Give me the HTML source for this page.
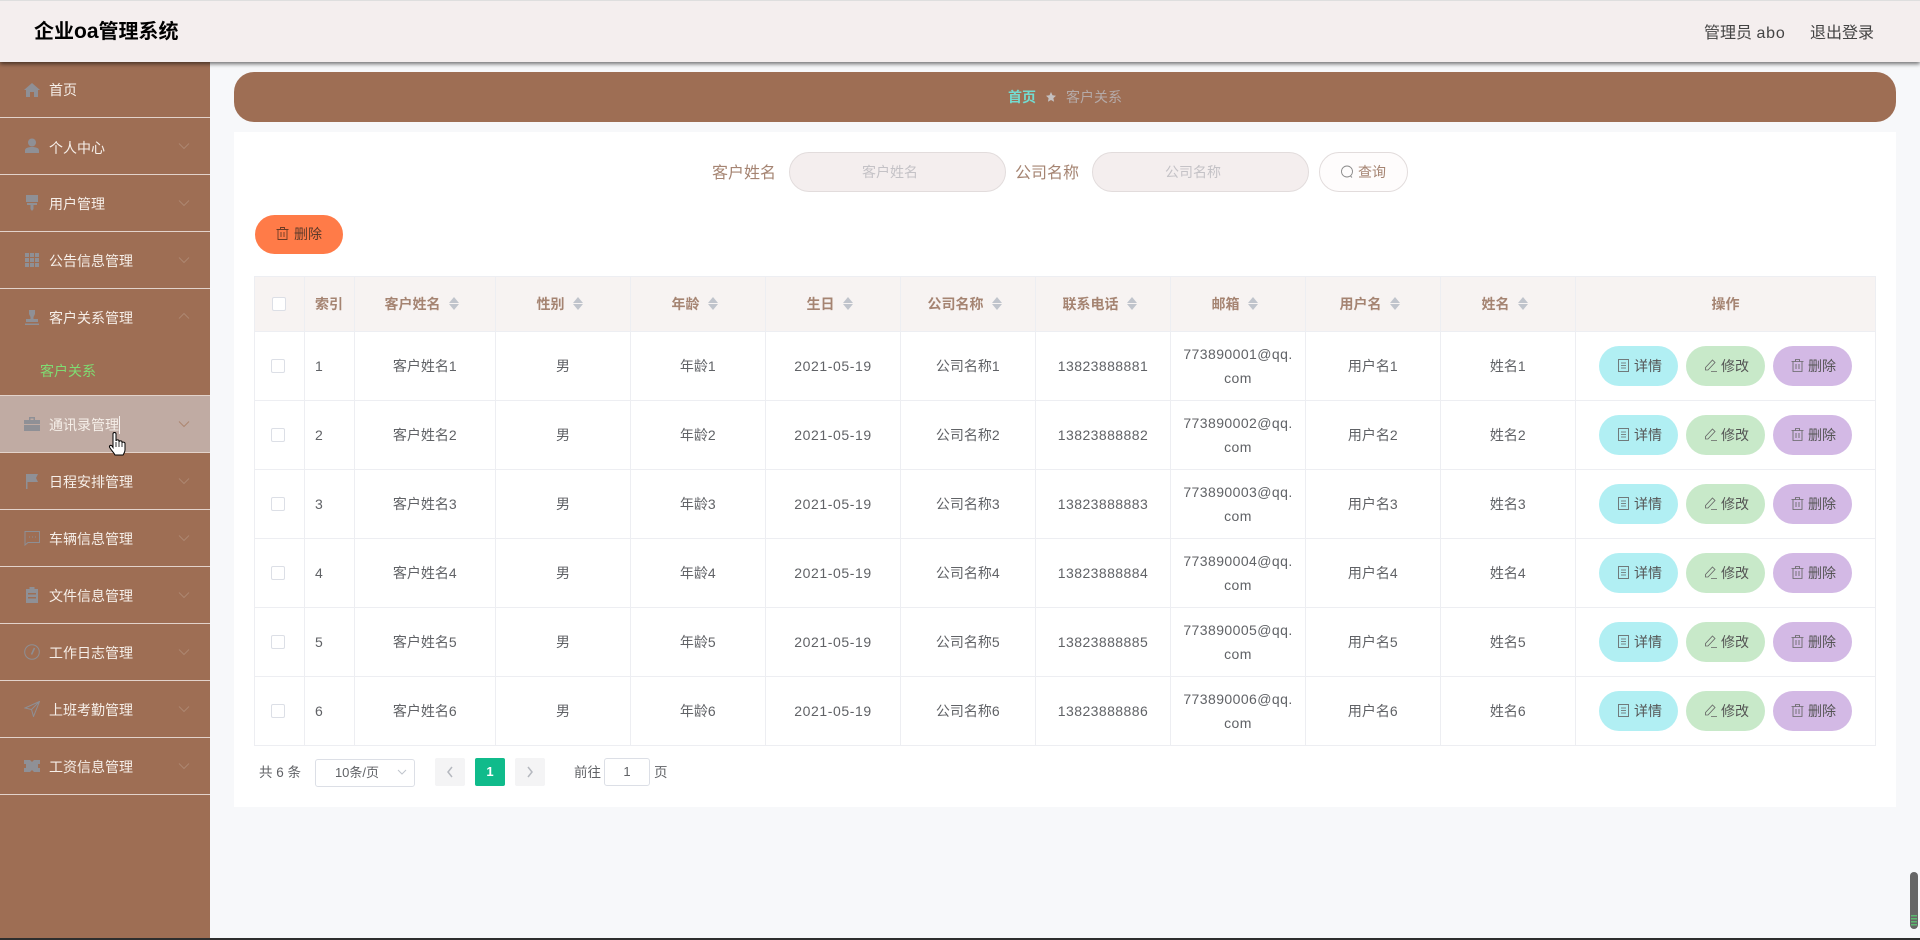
<!DOCTYPE html>
<html lang="zh-CN">
<head>
<meta charset="utf-8">
<title>企业oa管理系统</title>
<style>
*{box-sizing:border-box}
html,body{margin:0;padding:0;width:1920px;height:940px;overflow:hidden;background:#f7f8fa;font-family:"Liberation Sans","Noto Sans CJK SC",sans-serif;font-size:14px;color:#606266}
.abs{position:absolute}
#top{left:0;top:0;width:1920px;height:62px;background:#f4eeee;border-top:1px solid #dedede;box-shadow:0 2px 4px rgba(0,0,0,.55);z-index:5}
#top .t{position:absolute;left:34px;top:17px;font-size:20px;line-height:28px;font-weight:700;color:#000;white-space:nowrap}
#top .t span{font-size:21px}
#top .r{position:absolute;top:20px;line-height:26px;font-size:16px;color:#444;white-space:nowrap}
#side{left:0;top:62px;width:210px;height:876px;background:#9e6e54}
.m{position:absolute;left:0;width:210px;color:#f6efe9;line-height:20px;white-space:nowrap}
.m .tx{position:absolute;left:49px}
.m svg.ic{position:absolute;left:24px;width:16px;height:16px;fill:#8f9096}
.m svg.ch{position:absolute;left:178px;width:12px;height:8px;fill:none;stroke:#ad8670;stroke-width:1}
.ln{position:absolute;left:0;width:210px;height:1px;background:#e3d3cb}
#bc{left:234px;top:72px;width:1662px;height:50px;background:#9e6e54;border-radius:20px}
#card{left:234px;top:132px;width:1662px;height:675px;background:#fff}
.lb{font-size:16px;color:#a58472;line-height:24px;white-space:nowrap}
.inp{height:40px;top:152px;width:217px;background:#f4eeee;border:1px solid #e2dcdc;border-radius:20px;text-align:center;line-height:38px;color:#c4c2c6;font-size:14px;padding-right:15px}
.btn{display:block;position:absolute;height:40px;width:79px;border-radius:20px;line-height:40px;font-size:14px;color:#555;white-space:nowrap}
.btn svg{position:absolute;left:17px;top:12px;width:15px;height:15px;fill:none;stroke:#666;stroke-width:.85}
.btn span{position:absolute;left:35px}
.c1{background:#b1eff3}.c2{background:#c8e9c9}.c3{background:#d3b9e5}
table{position:absolute;left:254px;top:276px;width:1621px;border-collapse:collapse;table-layout:fixed;background:#fff}
th,td{border:1px solid #edeef2;text-align:center;padding:0;font-size:14px}
th{height:55px;background:#f7f3f2;color:#a58472;font-weight:700}
th:nth-child(n+3):nth-child(-n+11){padding-right:7px}
td{height:69px;color:#606266;line-height:24px}
.num{letter-spacing:.43px}
.dt{letter-spacing:.6px}
.cb{display:inline-block;position:relative;top:-1px;width:14px;height:14px;border:1px solid #dcdfe6;border-radius:2px;background:#fff;vertical-align:middle}
.car{display:inline-block;position:relative;top:-2px;width:10px;height:14px;margin-left:8px;vertical-align:middle}
.car:before,.car:after{content:"";position:absolute;left:0;border:5px solid transparent}
.car:before{top:1px;border-bottom:6px solid #c0c4cc;border-top:0}
.car:after{top:8px;border-top:6px solid #c0c4cc;border-bottom:0}
.pg{position:absolute;top:758px;height:28px;width:30px;background:#f4f4f5;border-radius:2px;text-align:center;line-height:28px;color:#c0c4cc}
.pt{position:absolute;top:762px;line-height:22px;font-size:13.500px;color:#606266;white-space:nowrap}
</style>
</head>
<body>
<svg width="0" height="0" style="position:absolute">
<symbol id="doc" viewBox="0 0 15 15"><rect x="2.500" y="1.500" width="10" height="12"/><path d="M5 5h5M5 7.500h5M5 10h5"/></symbol>
<symbol id="edit" viewBox="0 0 15 15"><path d="M9.500 2l2.500 2.500-7 7.500H2.500v-2.500zM8 13.500h6"/></symbol>
<symbol id="del" viewBox="0 0 15 15"><path d="M1.500 3.500h12M5.500 3.500V1.500h4v2M3 3.500v10h9v-10M6 6v5M9 6v5"/></symbol>
</svg>

<div id="top" class="abs">
  <div class="t">企业<span>oa</span>管理系统</div>
  <div class="r" style="left:1704px">管理员 <span style="letter-spacing:.8px">abo</span></div>
  <div class="r" style="left:1810px">退出登录</div>
</div>

<div id="side" class="abs"></div>
<div class="abs" style="left:0;top:396px;width:210px;height:56px;background:#c0aba3"></div>

<div class="m" style="top:62px;height:55px"><svg class="ic" style="top:20px" viewBox="0 0 16 16"><path d="M8 1L0 8h2v7h4v-5h4v5h4V8h2z"/></svg><span class="tx" style="top:18px">首页</span></div>
<div class="ln" style="top:117px"></div>
<div class="m" style="top:118px"><svg class="ic" style="top:20px" viewBox="0 0 16 16"><circle cx="8" cy="4.500" r="4"/><path d="M1 15v-2.500C1 10 4 9 8 9s7 1 7 3.500V15z"/></svg><span class="tx" style="top:20px">个人中心</span><svg class="ch" style="top:24px" viewBox="0 0 12 8"><path d="M1 1.500l5 5 5-5"/></svg></div>
<div class="ln" style="top:174px"></div>
<div class="m" style="top:175px"><svg class="ic" style="top:20px" viewBox="0 0 16 16"><path d="M2 0h12v7H2zM3 8h10v2H9.500v4L8 16l-1.500-2v-4H3z"/></svg><span class="tx" style="top:19px">用户管理</span><svg class="ch" style="top:24px" viewBox="0 0 12 8"><path d="M1 1.500l5 5 5-5"/></svg></div>
<div class="ln" style="top:231px"></div>
<div class="m" style="top:232px"><svg class="ic" style="top:20px" viewBox="0 0 16 16"><path d="M1 1h4v4H1zM6 1h4v4H6zM11 1h4v4h-4zM1 6h4v4H1zM6 6h4v4H6zM11 6h4v4h-4zM1 11h4v4H1zM6 11h4v4H6zM11 11h4v4h-4z"/></svg><span class="tx" style="top:19px">公告信息管理</span><svg class="ch" style="top:24px" viewBox="0 0 12 8"><path d="M1 1.500l5 5 5-5"/></svg></div>
<div class="ln" style="top:288px"></div>
<div class="m" style="top:289px"><svg class="ic" style="top:20px" viewBox="0 0 16 16"><path d="M5 1h6v4L9.500 8v2H14v3H2v-3h4.500V8L5 5zM1 14.500h14V16H1z"/></svg><span class="tx" style="top:19px">客户关系管理</span><svg class="ch" style="top:23px" viewBox="0 0 12 8"><path d="M1 6.500l5-5 5 5"/></svg></div>
<div class="m" style="top:345px;color:#7fdc72"><span class="tx" style="left:40px;top:16px">客户关系</span></div>
<div class="ln" style="top:395px"></div>
<div class="m" style="top:396px"><svg class="ic" style="top:20px" viewBox="0 0 16 16"><path d="M5 1h6v3h5v4H0V4h5zM6.500 2.500V4h3V2.500zM0 9h16v6H0z"/></svg><span class="tx" style="top:19px">通讯录管理</span><svg class="ch" style="top:24px" viewBox="0 0 12 8"><path d="M1 1.500l5 5 5-5"/></svg></div>
<div class="ln" style="top:452px"></div>
<div class="m" style="top:453px"><svg class="ic" style="top:20px" viewBox="0 0 16 16"><path d="M2 1h12l-2 4 2 4H3.500v7H2z"/></svg><span class="tx" style="top:19px">日程安排管理</span><svg class="ch" style="top:24px" viewBox="0 0 12 8"><path d="M1 1.500l5 5 5-5"/></svg></div>
<div class="ln" style="top:509px"></div>
<div class="m" style="top:510px"><svg class="ic" style="top:20px;fill:none;stroke:#8e8f94;stroke-width:1" viewBox="0 0 16 16"><path d="M1 1.500h14.500v11H4L1 15zM5 7h1M8 7h1M11 7h1"/></svg><span class="tx" style="top:19px">车辆信息管理</span><svg class="ch" style="top:24px" viewBox="0 0 12 8"><path d="M1 1.500l5 5 5-5"/></svg></div>
<div class="ln" style="top:566px"></div>
<div class="m" style="top:567px"><svg class="ic" style="top:20px" viewBox="0 0 16 16"><path d="M5.500 0h5v2H14v14H2V2h3.500zM4 6v1.500h8V6zM4 10v1.500h8V10z"/></svg><span class="tx" style="top:19px">文件信息管理</span><svg class="ch" style="top:24px" viewBox="0 0 12 8"><path d="M1 1.500l5 5 5-5"/></svg></div>
<div class="ln" style="top:623px"></div>
<div class="m" style="top:624px"><svg class="ic" style="top:20px;fill:none;stroke:#8e8f94;stroke-width:1" viewBox="0 0 16 16"><circle cx="8" cy="8" r="7.300"/><path d="M10.500 4L7.500 10.500" stroke-width="1.500"/></svg><span class="tx" style="top:19px">工作日志管理</span><svg class="ch" style="top:24px" viewBox="0 0 12 8"><path d="M1 1.500l5 5 5-5"/></svg></div>
<div class="ln" style="top:680px"></div>
<div class="m" style="top:681px"><svg class="ic" style="top:20px;fill:none;stroke:#8e8f94;stroke-width:1" viewBox="0 0 16 16"><path d="M15.500 .5L1 7l6.500 1.500L9.500 15.500zM7.500 8.500L15.500 .5"/></svg><span class="tx" style="top:19px">上班考勤管理</span><svg class="ch" style="top:24px" viewBox="0 0 12 8"><path d="M1 1.500l5 5 5-5"/></svg></div>
<div class="ln" style="top:737px"></div>
<div class="m" style="top:738px"><svg class="ic" style="top:20px" viewBox="0 0 16 16"><path d="M0 2h6l2 2 2-2h6v4h-2v4h2v4h-6l-2-2-2 2H0v-4h2V6H0z"/></svg><span class="tx" style="top:19px">工资信息管理</span><svg class="ch" style="top:24px" viewBox="0 0 12 8"><path d="M1 1.500l5 5 5-5"/></svg></div>
<div class="ln" style="top:794px"></div>

<div id="bc" class="abs"></div>
<div class="abs" style="left:1008px;top:87px;line-height:20px;font-weight:700;color:#73dbd0">首页</div>
<svg class="abs" style="left:1046px;top:92px" width="10" height="10" viewBox="0 0 10 10"><path d="M5 0l1.500 3.300 3.500.4-2.600 2.400.7 3.600L5 8 1.900 9.700l.7-3.600L0 3.700l3.500-.4z" fill="#c4c0c0"/></svg>
<div class="abs" style="left:1066px;top:87px;line-height:20px;color:#b5aaa8">客户关系</div>

<div id="card" class="abs"></div>

<div class="abs lb" style="left:712px;top:162px">客户姓名</div>
<div class="abs inp" style="left:789px">客户姓名</div>
<div class="abs lb" style="left:1015px;top:162px">公司名称</div>
<div class="abs inp" style="left:1092px">公司名称</div>
<div class="abs" style="left:1319px;top:152px;width:89px;height:40px;background:#fefcfc;border:1px solid #e2dcdc;border-radius:20px"></div>
<svg class="abs" style="left:1340px;top:165px" width="14" height="14" viewBox="0 0 14 14" fill="none" stroke="#8a8a8a" stroke-width=".9"><circle cx="7" cy="6.500" r="5.500"/><path d="M10.500 11l1.500 1.500"/></svg>
<div class="abs" style="left:1358px;top:162px;line-height:20px;color:#a58472">查询</div>

<div class="abs" style="left:255px;top:215px;width:88px;height:39px;background:#ff7b48;border-radius:20px"></div>
<svg class="abs" style="left:275px;top:226px;fill:none;stroke:#6b3a24;stroke-width:.9" width="15" height="15"><use href="#del"/></svg>
<div class="abs" style="left:294px;top:224px;line-height:20px;color:#5c3a2a">删除</div>

<table>
<colgroup><col style="width:50px"><col style="width:50px"><col style="width:141px"><col style="width:135px"><col style="width:135px"><col style="width:135px"><col style="width:135px"><col style="width:135px"><col style="width:135px"><col style="width:135px"><col style="width:135px"><col style="width:300px"></colgroup>
<tr><th><span class="cb" style="margin-left:-1px"></span></th><th style="text-align:left;padding-left:10px">索引</th><th>客户姓名<i class="car"></i></th><th>性别<i class="car"></i></th><th>年龄<i class="car"></i></th><th>生日<i class="car"></i></th><th>公司名称<i class="car"></i></th><th>联系电话<i class="car"></i></th><th>邮箱<i class="car"></i></th><th>用户名<i class="car"></i></th><th>姓名<i class="car"></i></th><th>操作</th></tr>
<tr><td><span class="cb" style="margin-left:-3px"></span></td><td class="num" style="text-align:left;padding-left:10px">1</td><td>客户姓名<span class="num">1</span></td><td>男</td><td>年龄<span class="num">1</span></td><td class="dt">2021-05-19</td><td>公司名称<span class="num">1</span></td><td class="num">13823888881</td><td class="num">773890001@qq.<br>com</td><td>用户名<span class="num">1</span></td><td>姓名<span class="num">1</span></td><td></td></tr>
<tr><td><span class="cb" style="margin-left:-3px"></span></td><td class="num" style="text-align:left;padding-left:10px">2</td><td>客户姓名<span class="num">2</span></td><td>男</td><td>年龄<span class="num">2</span></td><td class="dt">2021-05-19</td><td>公司名称<span class="num">2</span></td><td class="num">13823888882</td><td class="num">773890002@qq.<br>com</td><td>用户名<span class="num">2</span></td><td>姓名<span class="num">2</span></td><td></td></tr>
<tr><td><span class="cb" style="margin-left:-3px"></span></td><td class="num" style="text-align:left;padding-left:10px">3</td><td>客户姓名<span class="num">3</span></td><td>男</td><td>年龄<span class="num">3</span></td><td class="dt">2021-05-19</td><td>公司名称<span class="num">3</span></td><td class="num">13823888883</td><td class="num">773890003@qq.<br>com</td><td>用户名<span class="num">3</span></td><td>姓名<span class="num">3</span></td><td></td></tr>
<tr><td><span class="cb" style="margin-left:-3px"></span></td><td class="num" style="text-align:left;padding-left:10px">4</td><td>客户姓名<span class="num">4</span></td><td>男</td><td>年龄<span class="num">4</span></td><td class="dt">2021-05-19</td><td>公司名称<span class="num">4</span></td><td class="num">13823888884</td><td class="num">773890004@qq.<br>com</td><td>用户名<span class="num">4</span></td><td>姓名<span class="num">4</span></td><td></td></tr>
<tr><td><span class="cb" style="margin-left:-3px"></span></td><td class="num" style="text-align:left;padding-left:10px">5</td><td>客户姓名<span class="num">5</span></td><td>男</td><td>年龄<span class="num">5</span></td><td class="dt">2021-05-19</td><td>公司名称<span class="num">5</span></td><td class="num">13823888885</td><td class="num">773890005@qq.<br>com</td><td>用户名<span class="num">5</span></td><td>姓名<span class="num">5</span></td><td></td></tr>
<tr><td><span class="cb" style="margin-left:-3px"></span></td><td class="num" style="text-align:left;padding-left:10px">6</td><td>客户姓名<span class="num">6</span></td><td>男</td><td>年龄<span class="num">6</span></td><td class="dt">2021-05-19</td><td>公司名称<span class="num">6</span></td><td class="num">13823888886</td><td class="num">773890006@qq.<br>com</td><td>用户名<span class="num">6</span></td><td>姓名<span class="num">6</span></td><td></td></tr>
</table>

<a class="btn c1" style="left:1599px;top:346px"><svg><use href="#doc"/></svg><span>详情</span></a><a class="btn c2" style="left:1686px;top:346px"><svg><use href="#edit"/></svg><span>修改</span></a><a class="btn c3" style="left:1773px;top:346px"><svg><use href="#del"/></svg><span>删除</span></a>
<a class="btn c1" style="left:1599px;top:415px"><svg><use href="#doc"/></svg><span>详情</span></a><a class="btn c2" style="left:1686px;top:415px"><svg><use href="#edit"/></svg><span>修改</span></a><a class="btn c3" style="left:1773px;top:415px"><svg><use href="#del"/></svg><span>删除</span></a>
<a class="btn c1" style="left:1599px;top:484px"><svg><use href="#doc"/></svg><span>详情</span></a><a class="btn c2" style="left:1686px;top:484px"><svg><use href="#edit"/></svg><span>修改</span></a><a class="btn c3" style="left:1773px;top:484px"><svg><use href="#del"/></svg><span>删除</span></a>
<a class="btn c1" style="left:1599px;top:553px"><svg><use href="#doc"/></svg><span>详情</span></a><a class="btn c2" style="left:1686px;top:553px"><svg><use href="#edit"/></svg><span>修改</span></a><a class="btn c3" style="left:1773px;top:553px"><svg><use href="#del"/></svg><span>删除</span></a>
<a class="btn c1" style="left:1599px;top:622px"><svg><use href="#doc"/></svg><span>详情</span></a><a class="btn c2" style="left:1686px;top:622px"><svg><use href="#edit"/></svg><span>修改</span></a><a class="btn c3" style="left:1773px;top:622px"><svg><use href="#del"/></svg><span>删除</span></a>
<a class="btn c1" style="left:1599px;top:691px"><svg><use href="#doc"/></svg><span>详情</span></a><a class="btn c2" style="left:1686px;top:691px"><svg><use href="#edit"/></svg><span>修改</span></a><a class="btn c3" style="left:1773px;top:691px"><svg><use href="#del"/></svg><span>删除</span></a>

<div class="pt" style="left:259px">共 6 条</div>
<div class="abs" style="left:315px;top:759px;width:100px;height:28px;background:#fff;border:1px solid #dcdfe6;border-radius:3px;text-align:center;line-height:26px;font-size:13px;color:#606266;padding-right:16px">10条/页</div>
<svg class="abs" style="left:397px;top:769px" width="10" height="7" viewBox="0 0 10 7" fill="none" stroke="#c0c4cc"><path d="M1 1l4 4 4-4"/></svg>
<div class="pg" style="left:435px"><svg width="8" height="12" viewBox="0 0 8 12" fill="none" stroke="#b5b8bf" stroke-width="1.500" style="margin-top:8px"><path d="M6 1L2 6l4 5"/></svg></div>
<div class="pg" style="left:475px;background:#10bb8b;color:#fff;font-weight:700;font-size:13px">1</div>
<div class="pg" style="left:515px"><svg width="8" height="12" viewBox="0 0 8 12" fill="none" stroke="#b5b8bf" stroke-width="1.500" style="margin-top:8px"><path d="M2 1l4 5-4 5"/></svg></div>
<div class="pt" style="left:574px">前往</div>
<div class="abs" style="left:604px;top:758px;width:46px;height:28px;background:#fff;border:1px solid #dcdfe6;border-radius:3px;text-align:center;line-height:26px;font-size:13px;color:#606266">1</div>
<div class="pt" style="left:654px">页</div>

<div class="abs" style="left:119px;top:416px;width:1px;height:18px;background:#f5f0ee"></div>
<svg class="abs" style="left:108px;top:432px;z-index:6" width="20" height="24" viewBox="0 0 20 24"><path d="M5 2c0-2 3-2 3 0v7c0-1.500 3-1.500 3 0v1c0-1.500 3-1.500 3 0v1c0-1.500 3-1 3 .5V18c0 2-1 3-2 5H7c-1-2-3-4-5-7-1.500-2 .5-3.500 2-2l1 1.500z" fill="#fff" stroke="#000" stroke-width="1"/><path d="M8 10v5M11 10v5M14 11v4" stroke="#000" stroke-width=".8"/></svg>

<div class="abs" style="left:1910px;top:872px;width:8px;height:57px;background:#666;border-radius:4px"></div>
<div class="abs" style="left:1911px;top:915px;width:6px;height:12px;background:repeating-linear-gradient(#5cb870 0 1.500px,#666 1.500px 3px)"></div>
<div class="abs" style="left:0;top:938px;width:1920px;height:2px;background:#2e2e2e"></div>
</body>
</html>
